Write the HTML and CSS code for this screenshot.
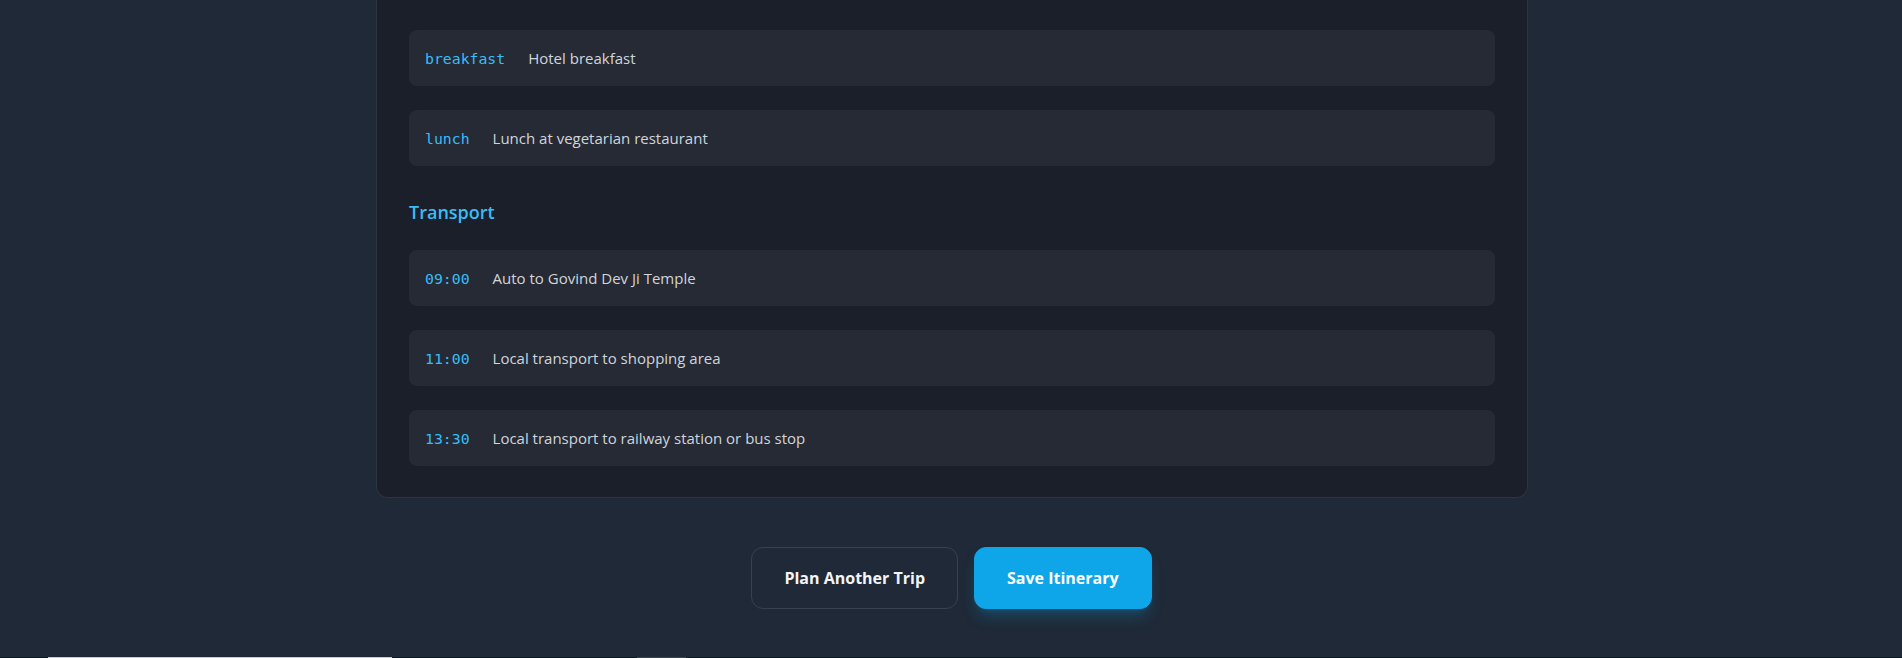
FILE: index.html
```html
<!DOCTYPE html>
<html lang="en">
<head>
<meta charset="utf-8">
<title>Itinerary</title>
<link rel="stylesheet" href="styles.css">
</head>
<body>
<div class="page">
  <main class="main">
    <section class="card">
      <div class="list">
        <div class="item"><span class="label">breakfast</span><span class="desc">Hotel breakfast</span></div>
        <div class="item"><span class="label">lunch</span><span class="desc">Lunch at vegetarian restaurant</span></div>
      </div>
      <h3 class="section-title">Transport</h3>
      <div class="list">
        <div class="item"><span class="label">09:00</span><span class="desc">Auto to Govind Dev Ji Temple</span></div>
        <div class="item"><span class="label">11:00</span><span class="desc">Local transport to shopping area</span></div>
        <div class="item"><span class="label">13:30</span><span class="desc">Local transport to railway station or bus stop</span></div>
      </div>
    </section>
    <div class="actions">
      <button class="btn btn-outline" type="button">Plan Another Trip</button>
      <button class="btn btn-primary" type="button">Save Itinerary</button>
    </div>
  </main>
  <div class="bottom-strip">
    <span class="strip-light"></span>
    <span class="strip-gray"></span>
  </div>
</div>
</body>
</html>
```

FILE: styles.css
```css
* { box-sizing: border-box; }
html, body { margin: 0; padding: 0; }
body {
  background: #1f2937;
  font-family: "Open Sans", "Noto Sans", sans-serif;
  color: #d1d5db;
}
.page {
  height: 658px;
  overflow: hidden;
  display: flex;
  flex-direction: column;
}
.main {
  flex: 1;
  display: flex;
  flex-direction: column;
  align-items: center;
}
.card {
  width: 1152px;
  margin-left: 2px;
  background: #1b1f2a;
  border: 1px solid #2c3441;
  border-top: none;
  border-radius: 0 0 12px 12px;
  padding: 30px 32px 31px;
}
.list {
  display: flex;
  flex-direction: column;
  gap: 24px;
}
.item {
  display: flex;
  align-items: center;
  gap: 23px;
  height: 56px;
  padding: 0 16px;
  background: #252a35;
  border-radius: 8px;
}
.label {
  font-family: "DejaVu Sans Mono", monospace;
  font-size: 14.8px;
  color: #38bdf8;
}
.desc {
  font-size: 15px;
  color: #d1d5db;
}
.section-title {
  margin: 32px 0 24px;
  font-size: 18px;
  line-height: 28px;
  font-weight: 600;
  color: #38bdf8;
}
.actions {
  display: flex;
  gap: 16px;
  margin-top: 49px;
  margin-left: 1px;
}
.btn {
  font-family: "Open Sans", "Noto Sans", sans-serif;
  font-size: 16px;
  font-weight: 700;
  line-height: 28px;
  padding: 16px 32px;
  border-radius: 12px;
  color: #f3f4f6;
  cursor: pointer;
}
.btn-outline {
  background: transparent;
  border: 1px solid #374151;
}
.btn-primary {
  background: #0ea5e9;
  border: 1px solid #0ea5e9;
  color: #ffffff;
  box-shadow: 0 10px 15px -3px rgba(14, 165, 233, 0.25), 0 4px 6px -4px rgba(14, 165, 233, 0.25);
}
.bottom-strip {
  height: 1px;
  flex-shrink: 0;
  background: #0b1a22;
  display: flex;
}
.strip-light {
  margin-left: 48px;
  width: 344px;
  background: #c8ccd0;
}
.strip-gray {
  margin-left: 245px;
  width: 49px;
  background: #3a4550;
}
```
